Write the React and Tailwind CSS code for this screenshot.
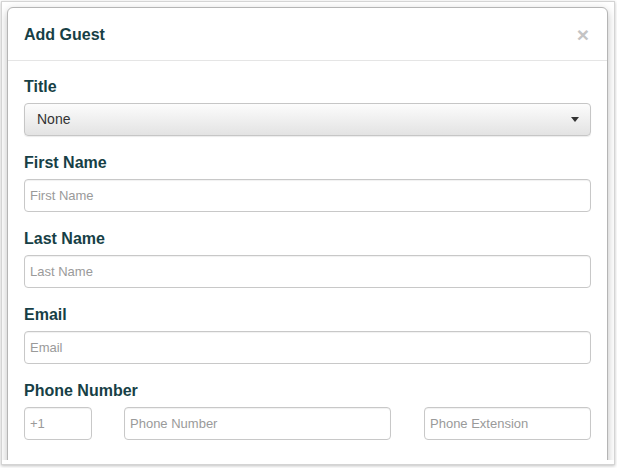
import React from 'react';

const labelCls = 'block text-[16px] leading-[18px] font-bold text-[#173f46] mb-[7px]';
const inputCls =
  'block h-[33px] w-full rounded-[4px] border border-[#c8c8c8] bg-white px-[5px] text-[13px] text-[#555] placeholder:text-[#9a9a9a] shadow-[inset_0_1px_1px_rgba(0,0,0,0.06)] outline-none';

const Field = ({ label, placeholder }) => (
  <div className="mb-[18px]">
    <label className={labelCls}>{label}</label>
    <input className={inputCls} placeholder={placeholder} />
  </div>
);

const App = () => {
  return (
    <div
      className="w-[617px] h-[468px] bg-white overflow-hidden"
      style={{ fontFamily: '"Liberation Sans", Arial, sans-serif' }}
    >
      {/* screenshot frame */}
      <div className="ml-[1px] mt-[1px] w-[614px] h-[464px] border border-[#d4d4d4] bg-white shadow-[0_1px_3px_rgba(0,0,0,0.25)]">
        <div className="h-[458px] overflow-hidden pl-[5px] pt-[5px]">
          {/* modal */}
          <div className="w-[601px] h-[480px] rounded-[6px] border border-[#b5b5b5] bg-white shadow-[0_3px_8px_rgba(0,0,0,0.25)]">
            {/* header */}
            <div className="flex h-[53px] items-center justify-between border-b border-[#e5e5e5] px-[16px] pt-[1px]">
              <h4 className="text-[16px] font-bold text-[#173f46]">Add Guest</h4>
              <span className="text-[21px] font-bold leading-none text-[#c4c4c4] mr-[2px]">×</span>
            </div>

            {/* body */}
            <div className="px-[16px] pt-[17px]">
              <div className="mb-[18px]">
                <label className={labelCls}>Title</label>
                <div className="flex h-[33px] items-center justify-between rounded-[4px] border border-[#c6c6c6] bg-gradient-to-b from-[#fcfcfc] to-[#e3e3e3] pl-[12px] pr-[11px] shadow-[0_1px_1px_rgba(0,0,0,0.08)]">
                  <span className="text-[14px] text-[#333]">None</span>
                  <svg width="8" height="5" viewBox="0 0 8 5">
                    <path d="M0 0h8L4 5z" fill="#333" />
                  </svg>
                </div>
              </div>

              <Field label="First Name" placeholder="First Name" />
              <Field label="Last Name" placeholder="Last Name" />
              <Field label="Email" placeholder="Email" />

              <div>
                <label className={labelCls}>Phone Number</label>
                <div className="flex">
                  <input className={`${inputCls} !w-[68px]`} placeholder="+1" />
                  <input className={`${inputCls} !w-[267px] ml-[32px]`} placeholder="Phone Number" />
                  <input className={`${inputCls} !w-[167px] ml-[33px]`} placeholder="Phone Extension" />
                </div>
              </div>
            </div>
          </div>
        </div>
      </div>
    </div>
  );
};

export default App;
